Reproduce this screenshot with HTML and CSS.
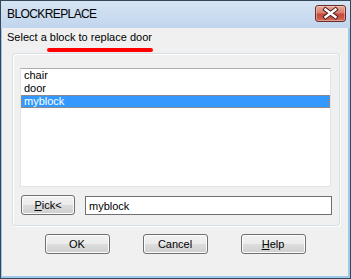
FILE: index.html
```html
<!DOCTYPE html>
<html lang="en">
<head>
  <meta charset="UTF-8">
  <title>BLOCKREPLACE</title>
  <link rel="stylesheet" href="styles.css">
</head>
<body>
<main class="window">
  <div class="titleBar">
    <span class="titleText">BLOCKREPLACE</span>
    <button class="closeBtn" aria-label="Close">
      <svg width="31" height="17" viewBox="0 0 31 17">
        <path d="M10.5 4.5 L20.5 12 M20.5 4.5 L10.5 12" stroke="#4a1c1c" stroke-width="4.4" stroke-linecap="square" fill="none"/>
        <path d="M10.5 4.5 L20.5 12 M20.5 4.5 L10.5 12" stroke="#ffffff" stroke-width="2.4" stroke-linecap="square" fill="none"/>
      </svg>
    </button>
  </div>
  <div class="client">
    <p class="prompt">Select a block to replace door<span class="redMark"></span></p>
    <section class="groupBox">
      <ul class="blockList">
        <li>chair</li>
        <li>door</li>
        <li class="selected">myblock</li>
      </ul>
      <div class="pickRow">
        <button class="btn pickBtn"><u>P</u>ick&lt;</button>
        <input class="nameField" type="text" value="myblock">
      </div>
    </section>
    <div class="buttonRow">
      <button class="btn">OK</button>
      <button class="btn">Cancel</button>
      <button class="btn"><u>H</u>elp</button>
    </div>
  </div>
</main>
</body>
</html>
```

FILE: styles.css
```css
:root {
  --frameDark: #34465a;
  --frameBlue: #9ec7ec;
  --clientBg: #f0f0f0;
  --textColor: #000;
  --selectBlue: #3399ff;
}
body {
  margin: 0;
  font-family: "Liberation Sans", Arial, sans-serif;
  font-size: 11px;
  color: var(--textColor);
}
.window {
  width: 351px;
  height: 279px;
  box-sizing: border-box;
  border: 1px solid var(--frameDark);
  background: var(--frameBlue);
  padding: 0 2px 2px 1px;
  display: flex;
  flex-direction: column;
}
.titleBar {
  height: 27px;
  margin: 0 -2px 0 -1px;
  padding: 0 4px 0 6px;
  background: linear-gradient(#d5e4f4, #c1d5ec);
  display: flex;
  align-items: flex-start;
  justify-content: space-between;
}
.titleText {
  margin-top: 7px;
  font-size: 12px;
  letter-spacing: -0.6px;
  line-height: 13px;
  color: #000;
}
.closeBtn {
  margin-top: 4px;
  width: 31px;
  height: 17px;
  padding: 0;
  border: 1px solid #6b2d2a;
  border-radius: 3px;
  background: linear-gradient(#eaa898 0%, #d9806e 45%, #c5483b 55%, #d26a55 100%);
  box-shadow: inset 0 0 0 1px rgba(255, 255, 255, 0.35);
  display: flex;
  align-items: center;
  justify-content: center;
}
.closeBtn svg {
  display: block;
  margin: -1px;
}
.client {
  flex: 1;
  background: var(--clientBg);
  display: flex;
  flex-direction: column;
}
.prompt {
  position: relative;
  margin: 3px 0 0 5px;
  line-height: 13px;
  align-self: flex-start;
}
.redMark {
  position: absolute;
  left: 40px;
  top: 17px;
  width: 106px;
  height: 4px;
  border-radius: 2px;
  background: #f00;
}
.groupBox {
  margin: 9px 0 0 10px;
  width: 328px;
  height: 173px;
  box-sizing: border-box;
  border: 1px solid #d5dfe5;
  border-radius: 3px;
  box-shadow: inset 1px 1px 0 #fff, 1px 1px 0 #fff;
  padding: 14px 0 10px 7px;
  display: flex;
  flex-direction: column;
}
.blockList {
  list-style: none;
  margin: 0;
  padding: 0;
  width: 311px;
  height: 119px;
  box-sizing: border-box;
  background: #fff;
  border: 1px solid #e2e3ea;
  border-top-color: #abadb3;
}
.blockList li {
  height: 13px;
  line-height: 13px;
  padding-left: 3px;
}
.blockList .selected {
  background: var(--selectBlue);
  color: #fff;
  outline: 1px dotted #e07a2a;
  outline-offset: -1px;
}
.pickRow {
  margin: 8px 0 0 1px;
  display: flex;
  align-items: flex-end;
  gap: 10px;
}
.btn {
  width: 65px;
  height: 20px;
  padding: 0;
  font-family: inherit;
  font-size: 11px;
  color: #000;
  border: 1px solid #707070;
  border-radius: 3px;
  background: linear-gradient(#f2f2f2 0%, #ebebeb 50%, #dddddd 50%, #cfcfcf 100%);
  box-shadow: inset 0 0 0 1px #fcfcfc;
}
.pickBtn {
  width: 54px;
}
.nameField {
  width: 247px;
  height: 19px;
  box-sizing: border-box;
  margin: 0;
  padding: 0 3px;
  border: 1px solid #6f6f6f;
  font-family: inherit;
  font-size: 11px;
  color: #000;
  background: #fff;
  outline: none;
}
.buttonRow {
  margin-top: 8px;
  display: flex;
  justify-content: center;
  gap: 33px;
}
```
